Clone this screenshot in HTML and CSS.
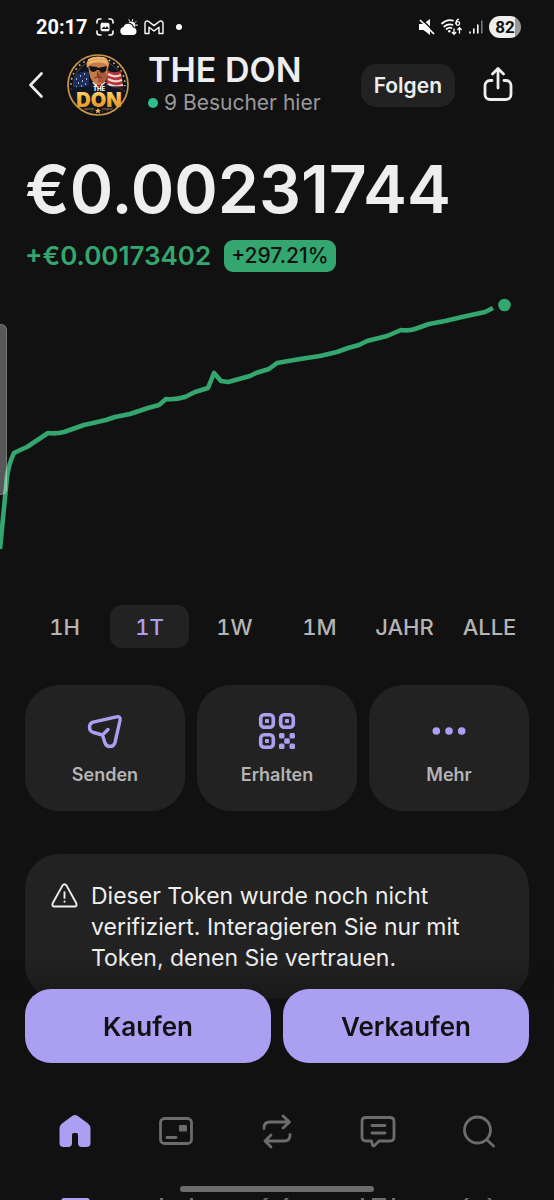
FILE: index.html
```html
<!DOCTYPE html>
<html lang="de">
<head>
    <meta charset="UTF-8">
    <meta name="viewport" content="width=device-width, initial-scale=1.0">
    <title>THE DON</title>
    <link rel="stylesheet" href="styles.css">
</head>
<body>
    <div class="status-bar">
        <div class="status-left">
            <span class="clock">20:17</span>
            <svg width="18" height="18" viewBox="0 0 18 18" fill="none" stroke="#fff" stroke-width="1.6" stroke-linecap="round">
                <path d="M1 5V3.5A2.5 2.5 0 0 1 3.5 1H5M13 1h1.500A2.500 2.500 0 0 1 17 3.500V5M17 13v1.500a2.500 2.500 0 0 1-2.500 2.500H13M5 17H3.500A2.500 2.500 0 0 1 1 14.500V13"/>
                <rect x="5" y="5.300" width="8" height="7.500" rx="1" fill="#fff" stroke-width="1"/>
                <path d="M5.500 11l2.500-2.500 1.500 1.500 1.500-2 1.800 3z" fill="#111" stroke="none"/>
            </svg>
            <svg width="18" height="16" viewBox="0 0 18 16" fill="#fff">
                <path d="M4 16a4 4 0 0 1-.5-7.900A5 5 0 0 1 13 8.500a3.800 3.800 0 0 1 .5 7.500z"/>
                <path d="M8.500 3.800a4 4 0 0 1 6.500 4.500l-1.200-.8A5.500 5.500 0 0 0 8.500 3.800z"/>
                <path d="M9 .8l.5 1.300M12.700.5l-.2 1.400M16 2.500l-1 1M17.500 6l-1.200.2" stroke="#fff" stroke-linecap="round"/>
            </svg>
            <svg width="20" height="15" viewBox="0 0 20 15" fill="none" stroke="#fff" stroke-width="1.400" stroke-linejoin="round">
                <path d="M1 3.200C1 1 3.200.4 4.700 1.500L10 5.600l5.300-4.100C16.800.4 19 1 19 3.200V13.500h-4V7.200L10 11 5 7.200v6.300H1z"/>
            </svg>
            <span class="status-dot"></span>
        </div>
        <div class="status-right">
            <svg width="16" height="16" viewBox="0 0 16 16">
                <path d="M0 5h4L11 0v16L4.500 11H0z" fill="#fff"/>
                <path d="M2.500 0l14 14" stroke="#111" stroke-width="1.500"/>
                <path d="M1 1l14 14" stroke="#fff" stroke-width="1.700"/>
            </svg>
            <svg width="22" height="18" viewBox="0 0 22 18" fill="none" stroke="#fff" stroke-width="1.700" stroke-linecap="round">
                <path d="M1 5.500Q6 1 12 2.600M3.300 8.500Q7 5.400 11.500 6.800M5.600 11Q8 9 10.500 10"/>
                <circle cx="8.300" cy="13.200" r="1.200" fill="#fff" stroke="none"/>
                <path d="M17.500 1.200q-2.500 1-2.500 4.200M13 11v5M11.300 14.500l1.700 1.900 1.700-1.900M18.500 15v-5M16.800 11.500l1.700-1.900 1.700 1.900" stroke-width="1.300"/>
                <circle cx="16.800" cy="5.500" r="1.800" stroke-width="1.300"/>
            </svg>
            <svg width="14" height="14" viewBox="0 0 14 14" stroke="#fff" stroke-width="1.600" stroke-linecap="round">
                <path d="M1 12v1M4.800 9v4M8.800 5v8"/>
                <path d="M12.800 1v12" stroke="#777"/>
            </svg>
            <span class="battery">82</span>
        </div>
    </div>

    <header class="token-header">
        <button class="icon-btn back-btn" aria-label="Zurück">
            <svg width="16" height="26" viewBox="0 0 16 26" fill="none" stroke="#eee" stroke-width="2.600" stroke-linecap="round" stroke-linejoin="round"><path d="M13.500 1.500L2.500 13l11 11.500"/></svg>
        </button>
        <svg class="avatar" viewBox="0 0 62 62">
            <defs>
                <linearGradient id="gold" x1="0" y1="0" x2="0" y2="1">
                    <stop offset="0" stop-color="#ffe28a"/>
                    <stop offset=".5" stop-color="#f3ad35"/>
                    <stop offset="1" stop-color="#d68a1c"/>
                </linearGradient>
                <clipPath id="badge"><circle cx="31" cy="31" r="28.500"/></clipPath>
            </defs>
            <circle cx="31" cy="31" r="30" fill="#10131c" stroke="#c9964a" stroke-width="1.700"/>
            <circle cx="31" cy="31" r="24.500" fill="none" stroke="#846233" stroke-width=".7"/>
            <circle cx="31" cy="31" r="27" fill="none" stroke="#e6c88a" stroke-width="1.500" stroke-dasharray="1.500 3.800"/>
            <g clip-path="url(#badge)">
                <path d="M7 23q7-7 15-5v17L6 37z" fill="#1c2f5c"/>
                <path d="M9 25h1M13 22h1M17 20h1M11 29h1M15 27h1M19 25h1M9 33h1M14 32h1M18 30h1" stroke="#d8dce8" stroke-width="1.400"/>
                <path d="M40 16q6 4 14 1l2 20-17-3z" fill="#b8323a"/>
                <path d="M41 20q6 4 13 1M41 25q6 4 14 1M41 30q6 4 15 1" fill="none" stroke="#eadbd2" stroke-width="2.200"/>
                <path d="M3 41q3-6 12-7l9-4h15l8 4q9 1 12 8v5H3z" fill="#172038"/>
                <path d="M25 28l6 8 8-8z" fill="#e8e4de"/>
                <path d="M30 30h4l1 6h-5z" fill="#b5242c"/>
                <path d="M21 12q0-9 10-9t10 10l-1 10q-2 7-8 8-6-1-9-8z" fill="#c87a4a"/>
                <path d="M31 19l6-4 3 7-4 7-5-1z" fill="#a9563a"/>
                <path d="M20 14q-2-9 6-11 14-4 16 7l-1 5-2-5q-8-3-16 0z" fill="#e2a35c"/>
                <path d="M22 6q8-4 17-1M22 9q8-4 17-1" fill="none" stroke="#f8cf8c" stroke-width=".8"/>
                <path d="M22 12l8 1 1 1 9-2-1 5q-5 4-7-1h-2q-4 4-7 0z" fill="#121217"/>
                <path d="M27 24q4-2 8 0M31 17l-1 5h3" fill="none" stroke="#71351f"/>
                <path d="M3 33l56-1v30H3z" fill="#10131c" opacity=".75"/>
            </g>
            <text x="32" y="37" class="avatar-small">THE</text>
            <text x="32" y="53" class="avatar-name">DON</text>
            <path d="M31 54l1 2h2l-1.600 1.300.6 2.200-2-1.300-2 1.300.6-2.200L28 56h2z" fill="#f0bd58"/>
            <path d="M17 55h10M35 55h10" stroke="#9e7436"/>
        </svg>
        <div class="token-title">
            <h1>THE DON</h1>
            <p><span class="online-dot"></span>9 Besucher hier</p>
        </div>
        <button class="follow-btn">Folgen</button>
        <button class="icon-btn share-btn" aria-label="Teilen">
            <svg width="30" height="36" viewBox="0 0 30 36" fill="none" stroke="#eee" stroke-width="2.800" stroke-linecap="round" stroke-linejoin="round">
                <path d="M9 13.500H7a5 5 0 0 0-5 5v9a5 5 0 0 0 5 5h16a5 5 0 0 0 5-5v-9a5 5 0 0 0-5-5h-2M15 21V2M9.500 7L15 1.500 20.500 7"/>
            </svg>
        </button>
    </header>

    <main>
        <section class="price-section">
            <div class="price">€0.00231744</div>
            <div class="price-change">
                <span>+€0.00173402</span>
                <span class="percent">+297.21%</span>
            </div>
        </section>

        <section class="chart">
            <svg viewBox="0 0 554 280" fill="none">
                <path d="M0 259L7 187Q9 173 14 163Q20 160 27 157L36 151L48 143Q56 144 64 142L84 135L106 130L115 127L130 124L148 118L159 115L166 109Q175 110 185 107L195 102L208 98L214 83L221 91L228 92L250 86L256 83L269 79L277 73L300 69L320 66L337 62L348 58L359 55L367 51L387 46L401 40Q409 41 415 39L429 34L445 31L462 27L485 22L493 18" stroke="#34a670" stroke-width="4.600" stroke-linejoin="round"/>
                <circle cx="504.500" cy="15" r="6.300" fill="#34a670"/>
            </svg>
            <div class="edge-handle"></div>
        </section>

        <div class="ranges">
            <button>1H</button>
            <button class="active">1T</button>
            <button>1W</button>
            <button>1M</button>
            <button>JAHR</button>
            <button>ALLE</button>
        </div>

        <div class="actions">
            <button>
                <svg width="40" height="40" viewBox="0 0 40 40" fill="none" stroke="#ab9ff2" stroke-width="3.400" stroke-linecap="round" stroke-linejoin="round">
                    <path d="M8 11.200L31.500 5.800Q36 5 35 9.500L30 31.500Q28.800 35.500 25 35.500Q21.500 35.500 20 32L17.500 24L8.500 21.500Q4.500 20 4.500 16.500Q4.500 12.500 8 11.200M17.500 24L23 18.500"/>
                </svg>
                <span>Senden</span>
            </button>
            <button>
                <svg width="40" height="40" viewBox="0 0 40 40" fill="none" stroke="#ab9ff2" stroke-width="3.600">
                    <rect x="3.700" y="3.700" width="12.600" height="12.600" rx="3.500"/>
                    <rect x="23.700" y="3.700" width="12.600" height="12.600" rx="3.500"/>
                    <rect x="3.700" y="23.700" width="12.600" height="12.600" rx="3.500"/>
                    <g fill="#ab9ff2" stroke="none">
                        <rect x="8" y="8" width="4" height="4" rx="1"/>
                        <rect x="28" y="8" width="4" height="4" rx="1"/>
                        <rect x="8" y="28" width="4" height="4" rx="1"/>
                        <rect x="22" y="22" width="5.500" height="5.500" rx="1.500"/>
                        <rect x="32.500" y="22" width="5.500" height="5.500" rx="1.500"/>
                        <rect x="27.200" y="27.200" width="5.600" height="5.600" rx="1.500"/>
                        <rect x="22" y="32.500" width="5.500" height="5.500" rx="1.500"/>
                        <rect x="32.500" y="32.500" width="5.500" height="5.500" rx="1.500"/>
                    </g>
                </svg>
                <span>Erhalten</span>
            </button>
            <button>
                <svg width="40" height="40" viewBox="0 0 40 40" fill="#ab9ff2">
                    <circle cx="7.300" cy="20" r="3.800"/>
                    <circle cx="20" cy="20" r="3.800"/>
                    <circle cx="32.700" cy="20" r="3.800"/>
                </svg>
                <span>Mehr</span>
            </button>
        </div>

        <div class="warning">
            <svg width="27" height="25" viewBox="0 0 28 26" fill="none" stroke="#eee" stroke-width="2" stroke-linecap="round" stroke-linejoin="round">
                <path d="M12 2.500Q14 0 16 2.500L26.300 21Q27.300 24.500 24.500 24.500H3.500Q.7 24.500 1.700 21z"/>
                <path d="M14 9.500v6M14 19.300v.2"/>
            </svg>
            <p>Dieser Token wurde noch nicht verifiziert. Interagieren Sie nur mit Token, denen Sie vertrauen.</p>
        </div>
    </main>

    <footer class="bottom-bar">
        <div class="trade">
            <button>Kaufen</button>
            <button>Verkaufen</button>
        </div>
        <nav>
            <a href="#" aria-label="Start">
                <svg width="40" height="40" viewBox="0 0 40 40" fill="#ab9ff2"><path d="M17.500 4.800q2.500-1.600 5 0L33 12.500q2.500 2 2.500 5V32q0 4-4 4H27q-4 0-4-4V24q0-2-1.500-2h-3Q17 22 17 24v8q0 4-4 4H8.500q-4 0-4-4V17.500q0-3 2.500-5z"/></svg>
            </a>
            <a href="#" aria-label="Karte">
                <svg width="40" height="40" viewBox="0 0 40 40" fill="none" stroke="#6c6c6c" stroke-width="2.800" stroke-linecap="round">
                    <rect x="4.500" y="7.500" width="31" height="25" rx="4"/>
                    <path d="M11 26.500h9"/>
                    <rect x="23" y="14" width="8" height="6.500" rx="1" fill="#6c6c6c" stroke="none"/>
                </svg>
            </a>
            <a href="#" aria-label="Tauschen">
                <svg width="40" height="40" viewBox="0 0 40 40" fill="none" stroke="#6c6c6c" stroke-width="2.800" stroke-linecap="round" stroke-linejoin="round">
                    <path d="M7 17.500v-.5q0-6 6-6h19M26 5l6.500 6-6.500 6M33 23.500v.5q0 6-6 6H8M14 24l-6 6 6 6"/>
                </svg>
            </a>
            <a href="#" aria-label="Chat">
                <svg width="40" height="40" viewBox="0 0 40 40" fill="none" stroke="#6c6c6c" stroke-width="2.800" stroke-linecap="round" stroke-linejoin="round">
                    <path d="M8 6.500h24q4 0 4 4V26q0 4-4 4H21l-4.500 4.500q-1.500 1-2-.7L13.500 30H8q-4 0-4-4V10.500q0-4 4-4zM14 14.500h13M14 22h13"/>
                </svg>
            </a>
            <a href="#" aria-label="Suche">
                <svg width="40" height="40" viewBox="0 0 40 40" fill="none" stroke="#6c6c6c" stroke-width="2.800" stroke-linecap="round">
                    <circle cx="18.500" cy="19" r="13"/>
                    <path d="M28 29l6.500 6"/>
                </svg>
            </a>
        </nav>
        <div class="home-indicator"></div>
        <div class="peek">
            <svg width="40" height="3" viewBox="0 0 40 3" fill="#ab9ff2"><path d="M8 1h25l2 2H6z"/></svg>
            <svg width="40" height="3" viewBox="0 0 40 3" fill="#6c6c6c"><path d="M4 1h3v2H4zM34 1h3v2h-3z"/></svg>
            <svg width="40" height="3" viewBox="0 0 40 3" fill="#6c6c6c"><path d="M8 1h4L9 3H6zM28 1h4l-2 2h-3z"/></svg>
            <svg width="40" height="3" viewBox="0 0 40 3" fill="#6c6c6c"><path d="M3 1h3v2H3zM14 1h14v2H14zM34 1h3v2h-3z"/></svg>
            <svg width="40" height="3" viewBox="0 0 40 3" fill="#6c6c6c"><path d="M7 1h3L8 3H5zM28 1h3l2 2h-3z"/></svg>
        </div>
    </footer>
</body>
</html>
```
FILE: styles.css
```css
* {
    box-sizing: border-box;
    margin: 0;
    padding: 0;
}

body {
    background-color: #111;
    color: #eee;
    font-family: Inter, 'Liberation Sans', sans-serif;
    padding-bottom: 201px;
}

button {
    border: none;
    background: none;
    color: inherit;
    font-family: inherit;
    cursor: pointer;
}

svg {
    display: block;
    flex-shrink: 0;
}

/* Status bar */
.status-bar {
    display: flex;
    justify-content: space-between;
    align-items: center;
    height: 54px;
    padding: 0 33px 0 36px;
}

.status-left,
.status-right {
    display: flex;
    align-items: center;
    gap: 6px;
}

.clock {
    margin-right: 2px;
    font-family: Roboto, sans-serif;
    font-size: 20px;
    font-weight: 700;
    color: #fff;
}

.status-dot {
    width: 6px;
    height: 6px;
    margin-left: 6px;
    border-radius: 50%;
    background-color: #fff;
}

.battery {
    width: 32px;
    height: 22px;
    border-radius: 11px;
    background: linear-gradient(to right, #eee 82%, #999 82%);
    color: #111;
    font-family: Roboto, sans-serif;
    font-size: 17px;
    font-weight: 700;
    line-height: 22px;
    text-align: center;
}

/* Token header */
.token-header {
    display: flex;
    align-items: center;
    height: 62px;
    padding: 0 41px 0 28px;
}

.icon-btn {
    display: flex;
}

.avatar {
    width: 62px;
    height: 62px;
    margin-left: 23px;
}

.avatar-small {
    font-size: 6px;
    font-weight: 800;
    text-anchor: middle;
    fill: #fff;
}

.avatar-name {
    font-size: 20px;
    font-weight: 900;
    text-anchor: middle;
    fill: url(#gold);
}

.token-title {
    flex: 1;
    margin-left: 19px;
}

.token-title h1 {
    font-size: 34px;
    font-weight: 600;
    line-height: 36px;
}

.token-title p {
    display: flex;
    align-items: center;
    gap: 6px;
    color: #999;
    font-size: 21px;
    line-height: 30px;
}

.online-dot {
    width: 10px;
    height: 10px;
    border-radius: 50%;
    background-color: #2ec08b;
}

.follow-btn {
    height: 43px;
    padding: 0 13px;
    border-radius: 15px;
    background-color: #222;
    font-size: 21px;
    font-weight: 600;
}

.share-btn {
    margin-left: 28px;
}

/* Price */
.price-section {
    padding: 33px 25px 0;
}

.price {
    font-size: 66px;
    font-weight: 600;
    line-height: 80px;
}

.price-change {
    display: flex;
    align-items: center;
    gap: 13px;
    margin-top: 11px;
    color: #34a670;
    font-size: 26px;
    font-weight: 600;
    line-height: 32px;
}

.percent {
    padding: 0 7px;
    border-radius: 9px;
    background-color: #34a670;
    color: #111;
    font-size: 21px;
    font-weight: 500;
}

/* Chart */
.chart {
    position: relative;
    margin-top: 18px;
}

.chart svg {
    width: 100%;
}

.edge-handle {
    position: absolute;
    left: 0;
    top: 34px;
    width: 7px;
    height: 171px;
    border: 1px solid rgba(255, 255, 255, 0.2);
    border-left: none;
    border-radius: 0 6px 6px 0;
    background-color: rgba(255, 255, 255, 0.3);
}

.ranges {
    display: grid;
    grid-template-columns: repeat(6, 1fr);
    gap: 6px;
    margin: 35px 25px 0;
}

.ranges button {
    height: 43px;
    border-radius: 12px;
    color: #b4b4b4;
    font-size: 22px;
    font-weight: 500;
    font-variant-numeric: tabular-nums;
}

.ranges .active {
    background-color: #222;
    color: #ab9ff2;
}

/* Actions */
.actions {
    display: grid;
    grid-template-columns: repeat(3, 1fr);
    gap: 12px;
    margin: 37px 25px 0;
}

.actions button {
    display: flex;
    flex-direction: column;
    align-items: center;
    gap: 13px;
    height: 126px;
    padding-top: 26px;
    border-radius: 34px;
    background-color: #222;
    color: #b4b4b4;
    font-size: 18px;
    font-weight: 600;
    line-height: 22px;
}

.warning {
    display: flex;
    gap: 13px;
    margin: 43px 25px 0;
    padding: 27px 26px 25px;
    border-radius: 34px;
    background-color: #222;
}

.warning svg {
    margin-top: 2px;
}

.warning p {
    font-size: 23px;
    line-height: 31px;
}

/* Bottom bar */
.bottom-bar {
    position: fixed;
    left: 0;
    right: 0;
    bottom: 0;
    padding-top: 29px;
    background: linear-gradient(to bottom, rgba(17, 17, 17, 0), rgba(17, 17, 17, 0.5) 38px, #111 40px);
}

.trade {
    display: grid;
    grid-template-columns: 1fr 1fr;
    gap: 12px;
    padding: 0 25px;
}

.trade button {
    height: 74px;
    border-radius: 26px;
    background-color: #ab9ff2;
    color: #111;
    font-size: 26px;
    font-weight: 600;
}

nav,
.peek {
    display: grid;
    grid-template-columns: repeat(5, 1fr);
    justify-items: center;
    padding: 0 25px;
}

nav {
    margin-top: 48px;
}

.home-indicator {
    width: 194px;
    height: 6px;
    margin: 35px auto 5px;
    border-radius: 3px;
    background-color: #6c6c6c;
}
```
